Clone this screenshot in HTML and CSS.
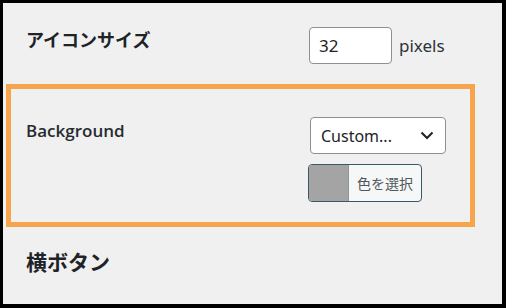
FILE: index.html
```html
<!DOCTYPE html>
<html lang="ja">
<head>
    <meta charset="UTF-8">
    <meta name="viewport" content="width=device-width, initial-scale=1.0">
    <title>アイコン設定</title>
    <link rel="stylesheet" href="styles.css">
</head>
<body>

<div class="frame">
    <div class="row row-size">
        <div class="label label-jp">アイコンサイズ</div>
        <div class="field field-inline">
            <input type="text" class="num-input" value="32">
            <span class="unit">pixels</span>
        </div>
    </div>

    <div class="highlight">
        <div class="row row-bg">
            <div class="label label-en">Background</div>
            <div class="field field-stack">
                <div class="select-box">
                    <span>Custom...</span>
                    <svg class="chevron" width="14" height="9" viewBox="0 0 14 9">
                        <path d="M1.5 1.5 L7 7 L12.5 1.5" fill="none" stroke="#1d2327" stroke-width="2"/>
                    </svg>
                </div>
                <button class="color-btn">
                    <span class="swatch"></span>
                    <span class="color-text">色を選択</span>
                </button>
            </div>
        </div>
    </div>

    <h2 class="section-title">横ボタン</h2>
</div>

</body>
</html>
```
FILE: styles.css
```css
/* Estilos generales */
* {
    box-sizing: border-box;
    margin: 0;
    padding: 0;
}

body {
    background-color: #000000;
    font-family: "Noto Sans", "Noto Sans CJK JP", sans-serif;
    color: #1d2327;
}

/* Marco de la captura */
.frame {
    width: 506px;
    height: 308px;
    border-style: solid;
    border-color: #000000;
    border-width: 3px 4px 4px 3px;
    background-color: #f0f0f1;
    overflow: hidden;
}

/* Filas del formulario */
.row {
    display: flex;
    align-items: flex-start;
}

.row-size {
    padding: 24px 0 0 23px;
}

.row-size .label {
    width: 283px;
}

.label-jp {
    font-family: "Noto Sans CJK JP", sans-serif;
    font-size: 18px;
    font-weight: bold;
    line-height: 25px;
}

.field-inline {
    display: flex;
    align-items: center;
    gap: 7px;
}

.num-input {
    width: 83px;
    height: 37px;
    padding: 0 9px;
    border: 1px solid #8c8f94;
    border-radius: 4px;
    background-color: #ffffff;
    font-family: "Noto Sans", sans-serif;
    font-size: 17px;
    color: #1d2327;
}

.unit {
    font-size: 17px;
    color: #2c3338;
}

/* Recuadro naranja */
.highlight {
    margin: 20px 0 0 3px;
    width: 469px;
    border: 5px solid #f6a54c;
    padding: 28px 0 20px 15px;
}

.row-bg .label {
    width: 284px;
}

.label-en {
    font-family: "Open Sans", "Noto Sans", sans-serif;
    font-size: 17px;
    font-weight: 600;
    line-height: 26px;
    padding-top: 1px;
    color: #262b30;
}

.field-stack {
    display: flex;
    flex-direction: column;
    align-items: flex-start;
    gap: 10px;
}

.select-box {
    width: 136px;
    height: 37px;
    display: flex;
    align-items: center;
    justify-content: space-between;
    padding: 0 11px 0 10px;
    border: 1px solid #8c8f94;
    border-radius: 4px;
    background-color: #ffffff;
    font-size: 16px;
}

.chevron {
    display: block;
}

/* Botón de color */
.color-btn {
    margin-left: -2px;
    width: 114px;
    height: 38px;
    display: flex;
    border: 1px solid #3a5868;
    border-radius: 4px;
    background-color: #f6f7f7;
    overflow: hidden;
    cursor: pointer;
}

.swatch {
    width: 40px;
    height: 100%;
    background-color: #a4a4a4;
    border-right: 1px solid #8f9699;
}

.color-text {
    flex: 1;
    font-family: "Noto Sans CJK JP", sans-serif;
    font-size: 14px;
    line-height: 36px;
    color: #50575e;
    text-align: left;
    padding-left: 8px;
}

/* Título de sección */
.section-title {
    margin: 19px 0 0 23px;
    font-family: "Noto Sans CJK JP", sans-serif;
    font-size: 21px;
    font-weight: bold;
    line-height: 30px;
}
```
